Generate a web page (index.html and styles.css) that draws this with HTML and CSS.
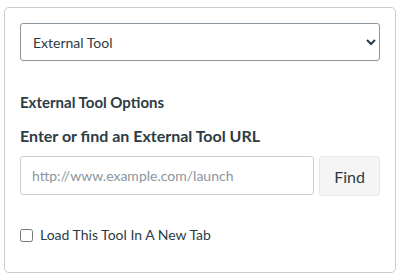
FILE: index.html
```html
<!DOCTYPE html>
<html lang="en">
<head>
    <meta charset="UTF-8">
    <title>External Tool</title>
    <link rel="stylesheet" href="styles.css">
</head>
<body>

<div class="panel">
    <select class="type-select">
        <option>External Tool</option>
    </select>

    <h4 class="options-title">External Tool Options</h4>
    <h3 class="url-title">Enter or find an External Tool URL</h3>

    <div class="url-row">
        <input type="text" class="url-input" placeholder="http://www.example.com/launch">
        <button class="find-btn">Find</button>
    </div>

    <label class="new-tab">
        <input type="checkbox">
        <span>Load This Tool In A New Tab</span>
    </label>
</div>

</body>
</html>
```

FILE: styles.css
```css
body {
    font-family: Lato, 'Open Sans', sans-serif;
    background-color: #fff;
    margin: 0;
    padding: 7px 5px 7px 4px;
    color: #2d3b45;
}
.panel {
    border: 1px solid #c7cdd1;
    border-radius: 5px;
    padding: 15px 15px 30px 15px;
    display: flex;
    flex-direction: column;
}
.type-select {
    height: 38px;
    padding: 0 8px 0 8px;
    font-family: inherit;
    font-size: 14px;
    color: #2d3b45;
    border: 1px solid #8b969e;
    border-radius: 3px;
    background-color: #fff;
}
.options-title {
    margin: 31px 0 0 0;
    font-size: 15px;
    line-height: 20px;
    font-weight: bold;
}
.url-title {
    margin: 13px 0 0 0;
    font-size: 16px;
    line-height: 22px;
    font-weight: bold;
}
.url-row {
    display: flex;
    gap: 5px;
    margin-top: 9px;
}
.url-input {
    flex: 1;
    height: 39px;
    box-sizing: border-box;
    padding: 0 11px;
    font-family: inherit;
    font-size: 14px;
    color: #2d3b45;
    border: 1px solid #c7cdd1;
    border-radius: 3px;
}
.url-input::placeholder {
    color: #8b969e;
}
.find-btn {
    width: 61px;
    height: 40px;
    font-family: inherit;
    font-size: 16px;
    color: #2d3b45;
    background-color: #f5f5f5;
    border: 1px solid #e6e8ea;
    border-radius: 3px;
}
.new-tab {
    display: flex;
    align-items: center;
    gap: 7px;
    margin-top: 32px;
    font-size: 14px;
    line-height: 14px;
}
.new-tab input {
    margin: 0;
    width: 13px;
    height: 13px;
}
```
